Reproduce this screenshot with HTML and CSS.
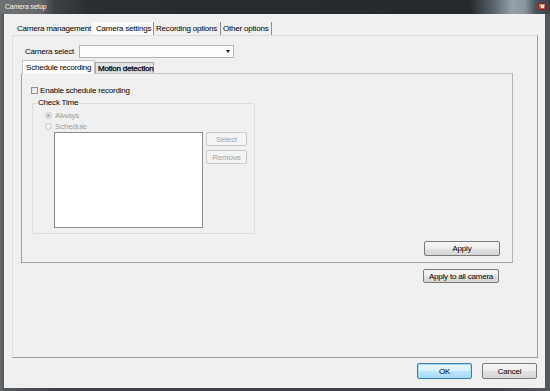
FILE: index.html
```html
<!DOCTYPE html>
<html>
<head>
<meta charset="utf-8">
<link rel="stylesheet" href="styles.css">
</head>
<body>
<div class="frame">
  <div class="titlebar">
    <span class="title">Camera setup</span>
    <span class="close"><span class="close-glyph"></span></span>
  </div>
  <div class="client">
    <div class="tabs-outer">
      <div class="otab w1">Camera management</div>
      <div class="otab w2 active">Camera settings</div>
      <div class="otab w3 sep">Recording options</div>
      <div class="otab w4 sep">Other options</div>
    </div>
    <div class="panel-outer">
      <div class="select-row">
        <span class="select-label">Camera select</span>
        <div class="combo"><span class="combo-arrow"></span></div>
      </div>
      <div class="tabs-inner">
        <div class="itab active">Schedule recording</div>
        <div class="itab other">Motion detection</div>
      </div>
      <div class="panel-inner">
        <div class="check-row">
          <span class="checkbox"></span>
          <span class="check-label">Enable schedule recording</span>
        </div>
        <div class="group">
          <span class="group-label">Check Time</span>
          <div class="radio-row first">
            <span class="radio checked"><span class="dot"></span></span>
            <span class="disabled-text">Always</span>
          </div>
          <div class="radio-row">
            <span class="radio"></span>
            <span class="disabled-text">Schedule</span>
          </div>
          <div class="list-row">
            <div class="listbox"></div>
            <div class="list-buttons">
              <div class="btn disabled">Select</div>
              <div class="btn disabled">Remove</div>
            </div>
          </div>
        </div>
        <div class="btn apply">Apply</div>
      </div>
      <div class="btn apply-all">Apply to all camera</div>
    </div>
    <div class="footer">
      <div class="btn footer-btn default">OK</div>
      <div class="btn footer-btn">Cancel</div>
    </div>
  </div>
</div>
</body>
</html>
```
FILE: styles.css
```css
* { box-sizing: border-box; }
html, body { margin: 0; padding: 0; }
body {
  width: 550px;
  height: 391px;
  overflow: hidden;
  background: #4e5256;
  font-family: "Liberation Sans", Arial, sans-serif;
  font-size: 8px;
  letter-spacing: -0.2px;
  color: #000;
}
.frame {
  width: 550px;
  height: 391px;
  display: flex;
  flex-direction: column;
  background: linear-gradient(to right, #6a6e72 0, #55595d 3px, #3e4246 10%, #3e4246 90%, #55595d 100%);
}
.titlebar {
  height: 14px;
  display: flex;
  align-items: center;
  background: linear-gradient(to right, #6e7174 0, #66696c 40px, #3e4145 54px, #2a2e32 90px, #25292d 470px, #5e6870 495px, #95a1ab 512px, #8a949d 525px, #4b525a 536px, #3b4046 550px);
}
.title {
  font-size: 6.8px;
  letter-spacing: -0.1px;
  color: #f4f4f4;
  margin-left: 5px;
  margin-top: -1px;
}
.close {
  margin-left: auto;
  margin-right: 4px;
  width: 8px;
  height: 7px;
  margin-top: -2px;
  background: linear-gradient(#e98a72, #c8442c);
  border: 1px solid #7a2a1d;
  border-radius: 1px;
  display: flex;
  align-items: center;
  justify-content: center;
}
.close-glyph {
  width: 3px;
  height: 3px;
  background: #f6e4e0;
}
.client {
  margin: 0 5px 3px 4px;
  height: 374px;
  background: #f0f0f0;
  padding: 8px 8px 9px 8px;
  display: flex;
  flex-direction: column;
}
.tabs-outer {
  height: 13px;
  display: flex;
  margin-left: 3px;
}
.otab {
  height: 13px;
  display: flex;
  align-items: center;
  padding-left: 2px;
  white-space: nowrap;
}
.otab.w1 { width: 77px; }
.otab.w2 { width: 61px; padding-left: 4px; background: #fcfcfc; }
.otab.w3 { width: 67px; }
.otab.w4 { width: 52px; }
.otab.sep { border-left: 1px solid #8c8c8c; }
.otab.w4 { border-right: 1px solid #8c8c8c; }
.panel-outer {
  width: 526px;
  height: 323px;
  border: 1px solid #dcdcdc;
  border-right-color: #9c9c9c;
  border-bottom-color: #9c9c9c;
  display: flex;
  flex-direction: column;
}
.select-row {
  margin-top: 9px;
  height: 13px;
  display: flex;
  align-items: center;
  margin-left: 12px;
}
.select-label {
  width: 54px;
  white-space: nowrap;
}
.combo {
  width: 155px;
  height: 13px;
  background: #fdfdfd;
  border: 1px solid #b4b4b4;
  display: flex;
  align-items: center;
  justify-content: flex-end;
  padding-right: 3px;
}
.combo-arrow {
  width: 0;
  height: 0;
  border-left: 2px solid transparent;
  border-right: 2px solid transparent;
  border-top: 3px solid #111;
}
.tabs-inner {
  margin-top: 2px;
  margin-left: 9px;
  height: 13px;
  display: flex;
  align-items: flex-end;
}
.itab {
  display: flex;
  align-items: center;
  white-space: nowrap;
}
.itab.active {
  width: 73px;
  height: 14px;
  margin-bottom: -1px;
  padding-left: 3px;
  background: #fcfcfc;
  border: 1px solid #c4c4c4;
  border-bottom: none;
  position: relative;
  z-index: 1;
}
.itab.other {
  width: 59px;
  height: 11px;
  padding-left: 2px;
  background: #e2e2e2;
  border: 1px solid #a8a8a8;
  border-bottom: none;
  -webkit-text-stroke: 0.25px #000;
}
.panel-inner {
  margin-left: 8px;
  width: 492px;
  height: 190px;
  border: 1px solid #c8c8c8;
  border-left-color: #a0a0a0;
  border-bottom-color: #a0a0a0;
  border-right-color: #b4b4b4;
  display: flex;
  flex-direction: column;
}
.check-row {
  margin-top: 12px;
  margin-left: 9px;
  height: 8px;
  display: flex;
  align-items: center;
}
.checkbox {
  width: 7px;
  height: 7px;
  border: 1px solid #8e8f8f;
  background: linear-gradient(135deg, #dcdcdc, #f8f8f8);
  margin-right: 2px;
}
.check-label { white-space: nowrap; }
.group {
  margin-top: 9px;
  margin-left: 10px;
  width: 223px;
  height: 131px;
  border: 1px solid #dcdcdc;
  border-radius: 2px;
  display: flex;
  flex-direction: column;
}
.group-label {
  margin-top: -6px;
  margin-left: 4px;
  height: 10px;
  line-height: 10px;
  background: #f0f0f0;
  align-self: flex-start;
  padding: 0 1px;
}
.radio-row {
  margin-top: 3px;
  margin-left: 12px;
  height: 8px;
  display: flex;
  align-items: center;
}
.radio {
  width: 7px;
  height: 7px;
  border-radius: 50%;
  border: 1px solid #c4c4c4;
  background: #f2f2f2;
  margin-right: 3px;
  display: flex;
  align-items: center;
  justify-content: center;
}
.dot {
  width: 3px;
  height: 3px;
  border-radius: 50%;
  background: #a8a8a8;
}
.disabled-text { color: #a0a0a0; white-space: nowrap; }
.list-row {
  margin-top: 2px;
  margin-left: 21px;
  display: flex;
  gap: 3px;
}
.listbox {
  width: 149px;
  height: 96px;
  background: #fff;
  border: 1px solid #8d8d8d;
}
.list-buttons {
  display: flex;
  flex-direction: column;
  gap: 4px;
}
.btn {
  display: flex;
  align-items: center;
  justify-content: center;
  white-space: nowrap;
  border: 1px solid #7a7a7a;
  border-radius: 2px;
  background: linear-gradient(#f6f6f6 0, #eeeeee 50%, #e2e2e2 51%, #d6d6d6 100%);
}
.btn.disabled {
  width: 41px;
  height: 14px;
  color: #a4a4a4;
  border-color: #c8c8c8;
  background: #f4f4f4;
}
.btn.apply {
  margin-top: auto;
  margin-bottom: 6px;
  align-self: flex-end;
  margin-right: 12px;
  width: 76px;
  height: 15px;
}
.btn.apply-all {
  margin-top: 6px;
  align-self: flex-end;
  margin-right: 38px;
  width: 76px;
  height: 14px;
}
.footer {
  margin-top: 5px;
  height: 16px;
  display: flex;
  justify-content: flex-end;
  gap: 10px;
}
.footer-btn {
  width: 55px;
  height: 16px;
}
.footer-btn.default {
  border-color: #3c7fb1;
  background: linear-gradient(#eaf6fd 0, #d9f0fc 50%, #bee6fd 51%, #a7d9f5 100%);
  box-shadow: inset 0 0 0 1px #a6dcf6;
}
```
